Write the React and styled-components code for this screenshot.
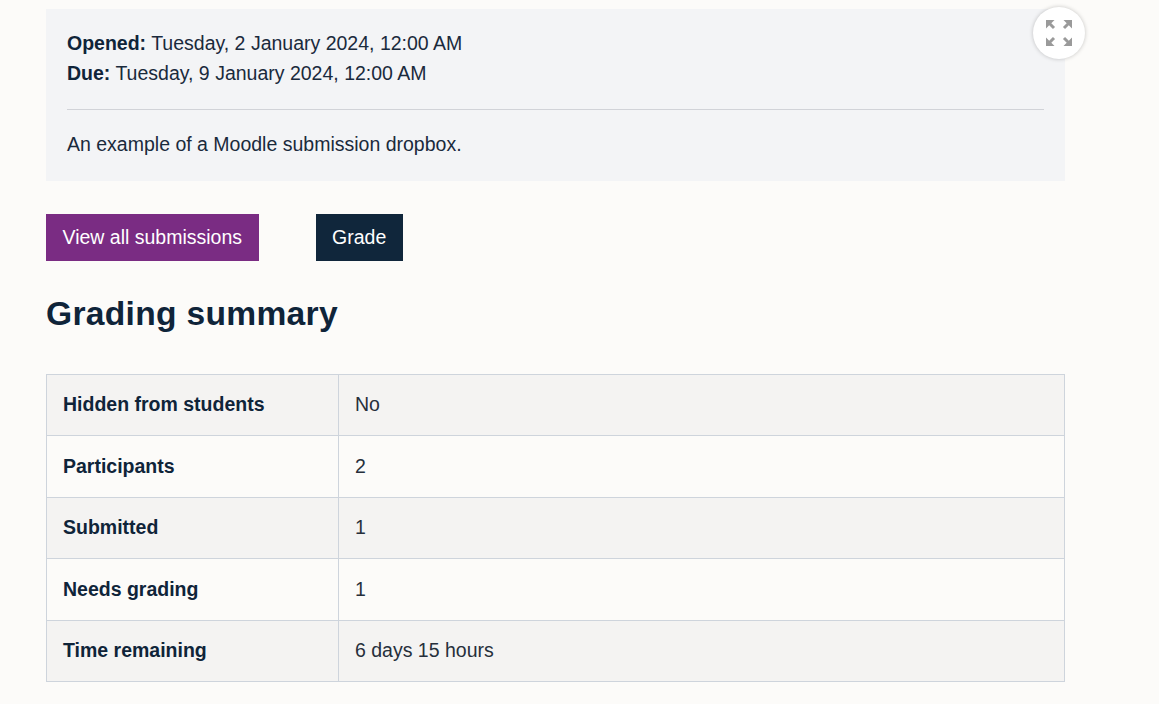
import React from 'react';
import styled, { createGlobalStyle } from 'styled-components';

const GlobalStyle = createGlobalStyle`
  html, body {
    margin: 0;
    padding: 0;
    height: 100%;
    background: #fcfbf9;
  }
  body {
    font-family: "Liberation Sans", Arial, sans-serif;
    color: #1a2a3c;
    overflow: hidden;
  }
`;

const Page = styled.main`
  position: relative;
  width: 1019px;
  padding: 9px 0 0 46px;
`;

const InfoPanel = styled.section`
  background: #f3f4f6;
  padding: 19px 21px 22px;
  font-size: 19.5px;
  line-height: 30px;
`;

const DateRow = styled.div`
  strong {
    font-weight: 700;
    color: #0f2439;
  }
`;

const Divider = styled.hr`
  border: 0;
  border-top: 1px solid #d1d3d8;
  margin: 21px 0 19px;
`;

const Description = styled.p`
  margin: 0;
`;

const ExpandButton = styled.button`
  position: absolute;
  top: 7px;
  left: 1033px;
  width: 52px;
  height: 52px;
  padding: 0;
  border: 0;
  border-radius: 50%;
  background: #ffffff;
  box-shadow: 0 0 4px rgba(0, 0, 0, 0.22);
  display: flex;
  align-items: center;
  justify-content: center;
`;

const Actions = styled.div`
  display: flex;
  gap: 57px;
  margin-top: 33px;
`;

const ActionButton = styled.a`
  display: block;
  padding: 0 16.5px;
  height: 47px;
  line-height: 47px;
  font-size: 19.5px;
  color: #ffffff;
  background: ${(p) => (p.$variant === 'purple' ? '#7a2c83' : '#10263b')};
`;

const Heading = styled.h2`
  margin: 33px 0 40px;
  font-size: 33.6px;
  line-height: 40px;
  font-weight: 700;
  letter-spacing: 0.3px;
  color: #0f2439;
`;

const SummaryTable = styled.table`
  width: 1019px;
  border-collapse: collapse;
  table-layout: fixed;
  font-size: 19.5px;
  line-height: 27px;
  margin-top: 2px;
`;

const Row = styled.tr`
  background: ${(p) => (p.$odd ? '#f4f3f2' : 'transparent')};
`;

const Label = styled.th`
  height: ${(p) => p.$height}px;
  padding: 0 16px 1px;
  box-sizing: border-box;
  text-align: left;
  font-weight: 700;
  color: #0f2439;
  border: 1px solid #ced4dc;
`;

const Value = styled.td`
  padding: 0 16px 1px;
  border: 1px solid #ced4dc;
  color: #262f3b;
`;

const rows = [
  { label: 'Hidden from students', value: 'No', height: 61 },
  { label: 'Participants', value: '2', height: 62 },
  { label: 'Submitted', value: '1', height: 61 },
  { label: 'Needs grading', value: '1', height: 62 },
  { label: 'Time remaining', value: '6 days 15 hours', height: 61 },
];

// one corner arrow, turned for each of the four corners
const ExpandIcon = () => (
  <svg width="28" height="28" viewBox="0 0 28 28" fill="#9a9a9a">
    {[0, 90, 180, 270].map((angle) => (
      <path
        key={angle}
        transform={`rotate(${angle} 14 14)`}
        d="M1 1H9.5L6.3 4.2 10.05 7.95 7.95 10.05 4.2 6.3 1 9.5Z"
      />
    ))}
  </svg>
);

export default function App() {
  return (
    <Page>
      <GlobalStyle />
      <InfoPanel>
        <DateRow><strong>Opened:</strong> Tuesday, 2 January 2024, 12:00 AM</DateRow>
        <DateRow><strong>Due:</strong> Tuesday, 9 January 2024, 12:00 AM</DateRow>
        <Divider />
        <Description>An example of a Moodle submission dropbox.</Description>
      </InfoPanel>
      <ExpandButton aria-label="Expand"><ExpandIcon /></ExpandButton>
      <Actions>
        <ActionButton $variant="purple">View all submissions</ActionButton>
        <ActionButton>Grade</ActionButton>
      </Actions>
      <Heading>Grading summary</Heading>
      <SummaryTable>
        <colgroup>
          <col style={{ width: 292 }} />
          <col />
        </colgroup>
        <tbody>
          {rows.map((row, i) => (
            <Row key={row.label} $odd={i % 2 === 0}>
              <Label $height={row.height}>{row.label}</Label>
              <Value>{row.value}</Value>
            </Row>
          ))}
        </tbody>
      </SummaryTable>
    </Page>
  );
}
